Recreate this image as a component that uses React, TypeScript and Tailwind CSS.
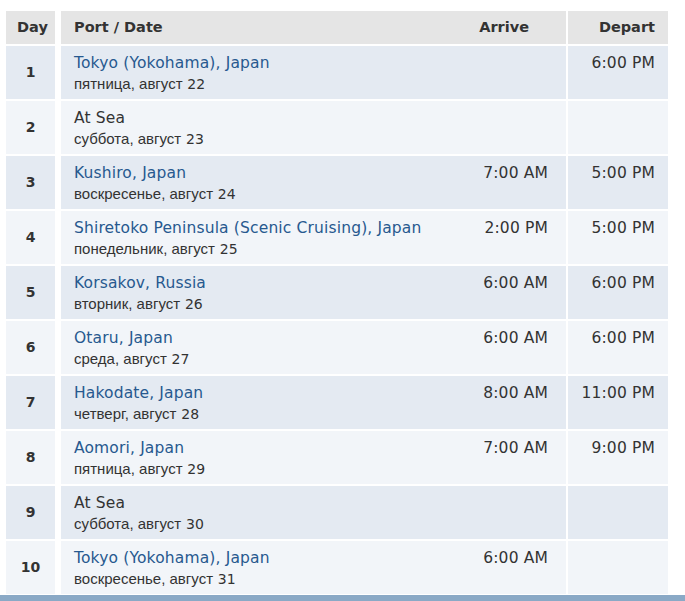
import React from 'react';

type Stop = {
  day: number;
  port: string;
  link: boolean;
  weekday: string;
  date: number;
  arrive?: string;
  depart?: string;
};

const stops: Stop[] = [
  { day: 1, port: 'Tokyo (Yokohama), Japan', link: true, weekday: 'пятница', date: 22, depart: '6:00 PM' },
  { day: 2, port: 'At Sea', link: false, weekday: 'суббота', date: 23 },
  { day: 3, port: 'Kushiro, Japan', link: true, weekday: 'воскресенье', date: 24, arrive: '7:00 AM', depart: '5:00 PM' },
  { day: 4, port: 'Shiretoko Peninsula (Scenic Cruising), Japan', link: true, weekday: 'понедельник', date: 25, arrive: '2:00 PM', depart: '5:00 PM' },
  { day: 5, port: 'Korsakov, Russia', link: true, weekday: 'вторник', date: 26, arrive: '6:00 AM', depart: '6:00 PM' },
  { day: 6, port: 'Otaru, Japan', link: true, weekday: 'среда', date: 27, arrive: '6:00 AM', depart: '6:00 PM' },
  { day: 7, port: 'Hakodate, Japan', link: true, weekday: 'четверг', date: 28, arrive: '8:00 AM', depart: '11:00 PM' },
  { day: 8, port: 'Aomori, Japan', link: true, weekday: 'пятница', date: 29, arrive: '7:00 AM', depart: '9:00 PM' },
  { day: 9, port: 'At Sea', link: false, weekday: 'суббота', date: 30 },
  { day: 10, port: 'Tokyo (Yokohama), Japan', link: true, weekday: 'воскресенье', date: 31, arrive: '6:00 AM' },
];

const main = "font-['DejaVu_Sans',sans-serif]";
const cyr = "font-['Liberation_Sans',Arial,sans-serif]";

export default function App() {
  return (
    <div className={`w-[685px] h-[601px] bg-white flex flex-col text-[#333] ${main}`}>
      <div className="flex-1 pt-[11px] pl-[6px] pr-[17px] flex flex-col gap-[2px]">
        {/* header */}
        <div className="flex h-[33px] text-[14.5px] font-bold text-[#333]">
          <div className="w-[49px] bg-[#e5e5e5] flex items-center justify-center pl-[4px]">Day</div>
          <div className="w-[6px]" />
          <div className="flex-1 bg-[#e5e5e5] flex items-center pl-[13px]">Port / Date</div>
          <div className="w-[126px] bg-[#e5e5e5] flex items-center justify-end pr-[37px]">Arrive</div>
          <div className="w-[2px]" />
          <div className="w-[100px] bg-[#e5e5e5] flex items-center justify-end pr-[13px]">Depart</div>
        </div>

        {stops.map((s, i) => {
          const bg = i % 2 === 0 ? 'bg-[#e4eaf2]' : 'bg-[#f2f5f9]';
          return (
            <div key={s.day} className="flex h-[53px]">
              <div className={`w-[49px] ${bg} flex items-center justify-center text-[14px] font-bold`}>
                {s.day}
              </div>
              <div className="w-[6px]" />
              <div className={`flex-1 ${bg} pl-[13px] pt-[7px]`}>
                <div className={`text-[15.5px] tracking-[0.15px] leading-[20px] ${s.link ? 'text-[#27598f]' : 'text-[#333]'}`}>
                  {s.port}
                </div>
                <div className="text-[15px] leading-[22px] text-[#333]">
                  <span className={cyr}>{s.weekday}, август</span> <span className="text-[14px]">{s.date}</span>
                </div>
              </div>
              <div className={`w-[126px] ${bg} pt-[7px] pr-[18px] text-right text-[15.5px] tracking-[0.15px] leading-[20px]`}>
                {s.arrive}
              </div>
              <div className="w-[2px]" />
              <div className={`w-[100px] ${bg} pt-[7px] pr-[13px] text-right text-[15.5px] tracking-[0.15px] leading-[20px]`}>
                {s.depart}
              </div>
            </div>
          );
        })}
      </div>
      <div className="h-[6px] bg-[#8aa9c6]" />
    </div>
  );
}
